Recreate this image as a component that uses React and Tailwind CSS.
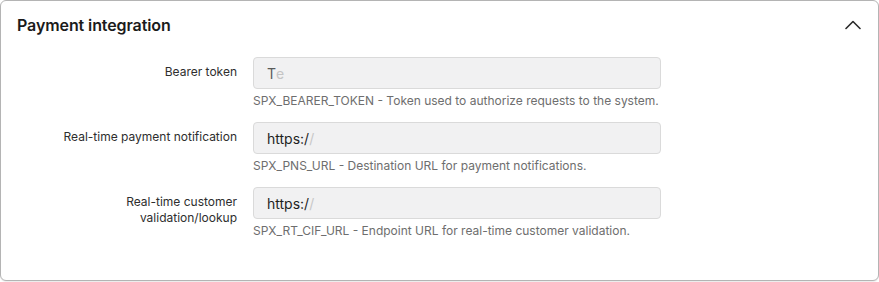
export default function App() {
  const rows = [
    {
      label: ["Bearer token"],
      value: (
        <>
          <span className="text-[#5a5a5a]">T</span>
          <span className="text-[#c4c4c4]">e</span>
        </>
      ),
      help: "SPX_BEARER_TOKEN - Token used to authorize requests to the system.",
    },
    {
      label: ["Real-time payment notification"],
      value: (
        <>
          <span className="text-[#1f1f1f]">https:/</span>
          <span className="text-[#c8c8c8]">/</span>
        </>
      ),
      help: "SPX_PNS_URL - Destination URL for payment notifications.",
    },
    {
      label: ["Real-time customer", "validation/lookup"],
      value: (
        <>
          <span className="text-[#1f1f1f]">https:/</span>
          <span className="text-[#c8c8c8]">/</span>
        </>
      ),
      help: "SPX_RT_CIF_URL - Endpoint URL for real-time customer validation.",
    },
  ];
  return (
    <div className="w-[879px] h-[282px] bg-white font-['Inter',sans-serif]">
      <div className="w-[879px] h-[281px] border border-[#b4b4b4] rounded-md bg-white shadow-[0_1px_1px_rgba(0,0,0,0.08)]">
        <div className="flex items-center justify-between pl-4 pr-[17px] h-[48px]">
          <h2 className="text-base leading-6 font-semibold text-[#1b1b1b] tracking-[-0.1px]">
            Payment integration
          </h2>
          <svg width="16" height="10" viewBox="0 0 16 10" fill="none">
            <polyline points="1,8.5 8,1.5 15,8.5" stroke="#2b2b2b" strokeWidth="1.6" strokeLinecap="round" strokeLinejoin="round" />
          </svg>
        </div>
        <div className="flex flex-col gap-[13px] px-4 pt-2">
          {rows.map((r, i) => (
            <div key={i} className="flex gap-4">
              <div className="w-[220px] text-right text-xs leading-4 text-[#2e2e2e] pt-[7px]">
                {r.label.map((l, j) => (
                  <div key={j}>{l}</div>
                ))}
              </div>
              <div className="flex flex-col">
                <div className="w-[408px] h-8 rounded border border-[#dadada] bg-[#f1f1f2] pl-[13px] pt-px flex items-center text-sm">
                  {r.value}
                </div>
                <div className="mt-1 text-xs leading-4 text-[#6e6e6e]">{r.help}</div>
              </div>
            </div>
          ))}
        </div>
      </div>
    </div>
  );
}
